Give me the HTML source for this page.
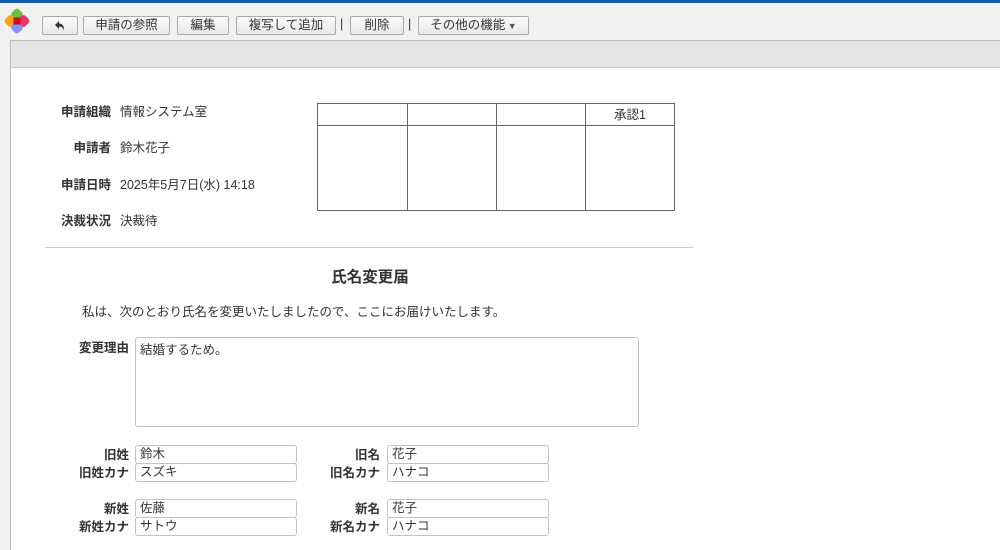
<!DOCTYPE html>
<html><head><meta charset="utf-8"><style>
*{margin:0;padding:0;box-sizing:border-box}
body{width:1000px;height:550px;overflow:hidden;background:#f1f1f1;font-family:"Liberation Sans","Noto Sans CJK JP",sans-serif;font-size:12.5px;color:#333;position:relative}
.a{position:absolute}
.btn{position:absolute;top:16px;height:19px;border:1px solid #aaa;border-radius:2px;background:linear-gradient(#fafafa,#e8e8e8);font-size:12.5px;line-height:17px;text-align:center;color:#333}
.sep{position:absolute;top:16px;line-height:17px;color:#333}
.lbl{position:absolute;font-weight:bold;text-align:right;white-space:nowrap}
.val{position:absolute;white-space:nowrap}
.in{position:absolute;width:162px;height:19px;border:1px solid #c4c4c4;border-radius:3px;background:#fff;padding-left:4px;line-height:16px}
</style></head><body>
<div class="a" style="left:0;top:0;width:1000px;height:3px;background:#1f5aa6"></div>
<svg class="a" style="left:4px;top:8px" width="26" height="26" viewBox="0 0 26 26">
<rect x="8" y="1.5" width="10" height="10" rx="3" transform="rotate(45 13 6.5)" fill="#6cbf3a"/>
<rect x="1.5" y="8" width="10" height="10" rx="3" transform="rotate(45 6.5 13)" fill="#f7a21b"/>
<rect x="14.5" y="8" width="10" height="10" rx="3" transform="rotate(45 19.5 13)" fill="#e8336a"/>
<rect x="8" y="14.5" width="10" height="10" rx="3" transform="rotate(45 13 19.5)" fill="#8c8cf2"/>
<rect x="9.5" y="9.5" width="7" height="7" fill="#c8101e"/></svg>
<div class="btn" style="left:42px;width:36px"><svg width="12" height="12" viewBox="0 0 12 12" style="margin-top:3px"><path d="M5 1 L1 5 L5 9 L5 6.5 C8 6.5 9.5 8 10 11 C10.5 6 8 3.5 5 3.5 Z" fill="#333"/></svg></div>
<div class="btn" style="left:83px;width:87px">申請の参照</div>
<div class="btn" style="left:177px;width:52px">編集</div>
<div class="btn" style="left:236px;width:100px">複写して追加</div>
<div class="sep" style="left:340px">|</div>
<div class="btn" style="left:350px;width:54px">削除</div>
<div class="sep" style="left:408px">|</div>
<div class="btn" style="left:418px;width:111px">その他の機能<span style="font-size:9px;color:#555"> ▼</span></div>
<div class="a" style="left:10px;top:40px;width:990px;height:510px;background:#fff;border-left:1px solid #bbb;border-top:1px solid #bbb"></div>
<div class="a" style="left:11px;top:41px;width:989px;height:27px;background:#e5e5e5;border-bottom:1px solid #ccc"></div>

<div class="lbl" style="right:889px;top:101px">申請組織</div><div class="val" style="left:120px;top:101px">情報システム室</div>
<div class="lbl" style="right:889px;top:137px">申請者</div><div class="val" style="left:120px;top:137px">鈴木花子</div>
<div class="lbl" style="right:889px;top:174px">申請日時</div><div class="val" style="left:120px;top:174px">2025年5月7日(水) 14:18</div>
<div class="lbl" style="right:889px;top:210px">決裁状況</div><div class="val" style="left:120px;top:210px">決裁待</div>

<table class="a" style="left:317px;top:103px;width:358px;height:108px;border-collapse:collapse;font-size:12.5px">
<tr style="height:22px"><td style="border:1px solid #666;width:90px"></td><td style="border:1px solid #666;width:89px"></td><td style="border:1px solid #666;width:89px"></td><td style="border:1px solid #666;text-align:center;vertical-align:middle;line-height:18px">承認1</td></tr>
<tr><td style="border:1px solid #666"></td><td style="border:1px solid #666"></td><td style="border:1px solid #666"></td><td style="border:1px solid #666"></td></tr>
</table>

<div class="a" style="left:45px;top:247px;width:648px;height:1px;background:#ccc"></div>
<div class="a" style="left:270px;top:265px;width:200px;text-align:center;font-weight:bold;font-size:15.5px">氏名変更届</div>
<div class="val" style="left:82px;top:301px">私は、次のとおり氏名を変更いたしましたので、ここにお届けいたします。</div>

<div class="lbl" style="right:871px;top:337px">変更理由</div>
<div class="a" style="left:135px;top:337px;width:504px;height:90px;border:1px solid #c4c4c4;border-radius:3px;padding:1px 4px">結婚するため。</div>

<div class="lbl" style="right:871px;top:444px">旧姓</div><div class="in" style="left:135px;top:445px">鈴木</div>
<div class="lbl" style="right:871px;top:462px">旧姓カナ</div><div class="in" style="left:135px;top:463px">スズキ</div>
<div class="lbl" style="right:620px;top:444px">旧名</div><div class="in" style="left:387px;top:445px">花子</div>
<div class="lbl" style="right:620px;top:462px">旧名カナ</div><div class="in" style="left:387px;top:463px">ハナコ</div>

<div class="lbl" style="right:871px;top:498px">新姓</div><div class="in" style="left:135px;top:499px">佐藤</div>
<div class="lbl" style="right:871px;top:516px">新姓カナ</div><div class="in" style="left:135px;top:517px">サトウ</div>
<div class="lbl" style="right:620px;top:498px">新名</div><div class="in" style="left:387px;top:499px">花子</div>
<div class="lbl" style="right:620px;top:516px">新名カナ</div><div class="in" style="left:387px;top:517px">ハナコ</div>
</body></html>
